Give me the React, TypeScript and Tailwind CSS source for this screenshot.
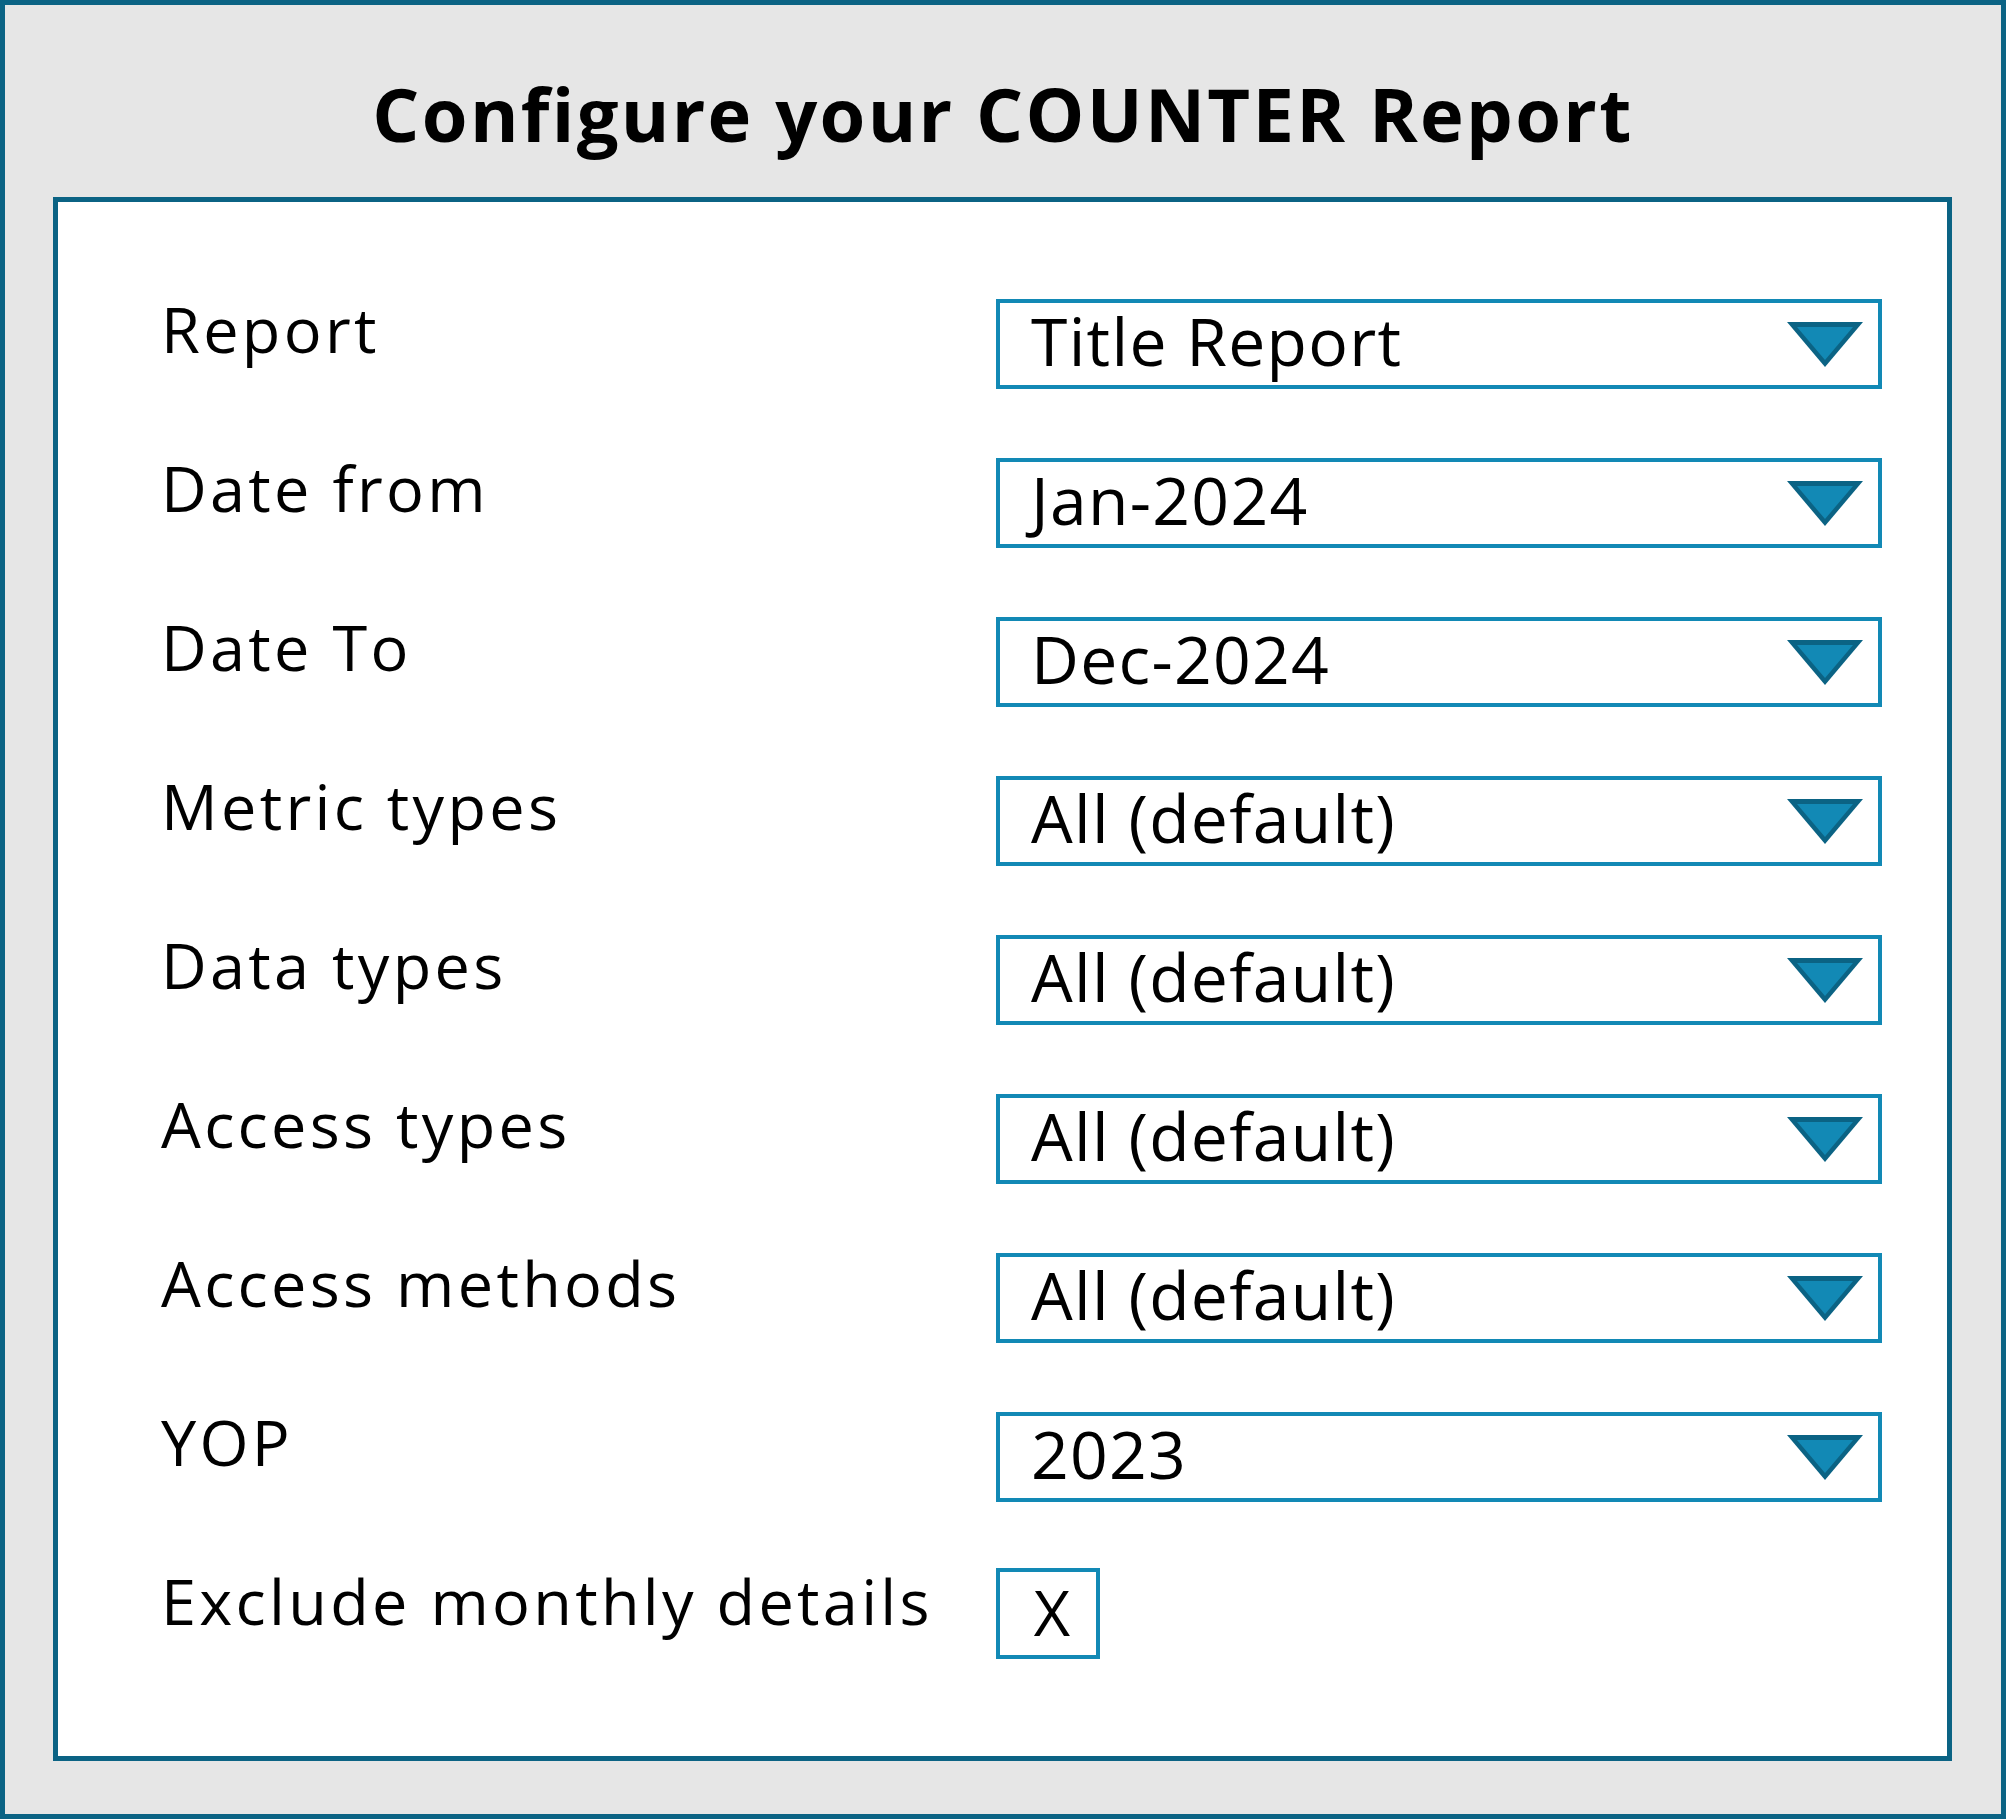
import React from 'react';

const rows = [
  { label: 'Report', value: 'Title Report' },
  { label: 'Date from', value: 'Jan-2024' },
  { label: 'Date To', value: 'Dec-2024' },
  { label: 'Metric types', value: 'All (default)' },
  { label: 'Data types', value: 'All (default)' },
  { label: 'Access types', value: 'All (default)' },
  { label: 'Access methods', value: 'All (default)' },
  { label: 'YOP', value: '2023' },
];

const Caret: React.FC = () => (
  <svg width="76" height="45" viewBox="0 0 76 45" className="shrink-0 mt-[19px]">
    <polygon points="0,0 76,0 38,45" fill="#0b6384" />
    <polygon points="10,5 66,5 38,38" fill="#1289b5" />
  </svg>
);

const App: React.FC = () => {
  return (
    <div
      className="w-[2006px] h-[1819px] border-[5px] border-[#0b6384] bg-[#e6e6e6] flex flex-col text-black"
      style={{ fontFamily: '"Open Sans", "Noto Sans", sans-serif' }}
    >
      <div className="h-[192px] pt-[72px] text-center">
        <h1 className="text-[74px] font-bold leading-none tracking-[2.3px]">Configure your COUNTER Report</h1>
      </div>

      <div className="ml-[48px] w-[1899px] h-[1564px] border-[5px] border-[#0b6384] bg-white pl-[103px] pt-[97px]">
        <div className="flex flex-col gap-[69px]">
          {rows.map((row) => (
            <div key={row.label} className="flex items-start h-[90px]">
              <div className="w-[835px] text-[63px] leading-none -mt-[2px] tracking-[3.3px]">{row.label}</div>
              <div className="w-[886px] h-[90px] border-4 border-[#1289b5] flex items-start justify-between pl-[31px] pr-[15px]">
                <span className="text-[66px] leading-none mt-[4px] tracking-[1.3px]">{row.value}</span>
                <Caret />
              </div>
            </div>
          ))}

          <div className="flex items-start h-[90px]">
            <div className="w-[835px] text-[63px] leading-none -mt-[2px] tracking-[3.3px]">Exclude monthly details</div>
            <div className="w-[104px] h-[91px] -mt-[3px] border-4 border-[#1289b5] flex justify-center pl-[8px]">
              <span className="text-[63px] leading-none mt-[8px]">X</span>
            </div>
          </div>
        </div>
      </div>
    </div>
  );
};

export default App;
